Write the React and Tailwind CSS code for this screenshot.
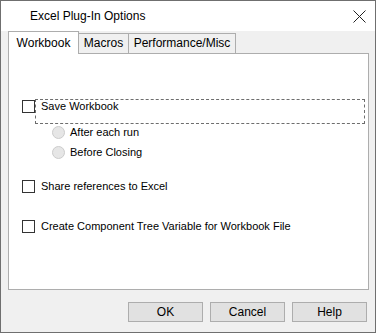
import React from 'react'

function Checkbox() {
  return <div className="w-[13px] h-[13px] border border-[#333333] bg-white shrink-0" />
}

function Radio() {
  return <div className="w-[13px] h-[13px] rounded-full border border-[#cccccc] bg-[#e6e6e6] shrink-0" />
}

const BUTTONS = ['OK', 'Cancel', 'Help']

export default function App() {
  return (
    <div className="w-[376px] h-[333px] border border-[#6f6f6f] bg-[#f0f0f0] flex flex-col text-[12px] text-black font-['Liberation_Sans',Arial,sans-serif] select-none">
      {/* title bar */}
      <div className="h-[30px] bg-white flex items-center pl-[29px] pr-[9px] shrink-0">
        <span className="flex-1 leading-[15px]">Excel Plug-In Options</span>
        <svg width="13" height="13" viewBox="0 0 13 13">
          <path d="M0.5 0.5 L12.5 12.5 M12.5 0.5 L0.5 12.5" stroke="#222" strokeWidth="1" fill="none" />
        </svg>
      </div>

      {/* tabs */}
      <div className="flex items-end h-[22px] ml-[7px]">
        <div className="relative z-10 w-[71px] h-[23px] -mb-px border border-b-0 border-[#adadad] bg-white flex items-center justify-center leading-[15px]">
          Workbook
        </div>
        <div className="w-[51px] h-[20px] -ml-px border border-b-0 border-[#adadad] bg-[#f0f0f0] flex items-center justify-center leading-[15px]">
          Macros
        </div>
        <div className="w-[108px] h-[20px] -ml-px border border-b-0 border-[#adadad] bg-[#f0f0f0] flex items-center justify-center leading-[15px]">
          Performance/Misc
        </div>
      </div>

      {/* panel */}
      <div className="h-[237px] ml-[7px] mr-[6px] border border-[#adadad] bg-white flex flex-col shrink-0 text-[11px]">
        <div className="flex mt-[45px] pl-[13px]">
          <div className="mt-[1px]"><Checkbox /></div>
          <div className="w-[330px] h-[25px] border border-dashed border-[#6d6d6d] pl-[5px] leading-[13px]">
            Save Workbook
          </div>
        </div>
        <div className="flex items-center h-[13px] mt-[2px] pl-[43px] gap-[5px]">
          <Radio />
          <span className="leading-[14px] mb-[2px]">After each run</span>
        </div>
        <div className="flex items-center h-[13px] mt-[7px] pl-[43px] gap-[5px]">
          <Radio />
          <span className="leading-[14px] mb-[2px]">Before Closing</span>
        </div>
        <div className="flex items-center h-[13px] mt-[21px] pl-[13px] gap-[6px]">
          <Checkbox />
          <span className="leading-[14px] mb-[2px]">Share references to Excel</span>
        </div>
        <div className="flex items-center h-[13px] mt-[27px] pl-[13px] gap-[6px]">
          <Checkbox />
          <span className="leading-[14px] mb-[2px]">Create Component Tree Variable for Workbook File</span>
        </div>
      </div>

      {/* buttons */}
      <div className="flex justify-end gap-[7px] mt-[12px] pr-[8px]">
        {BUTTONS.map(b => (
          <button key={b} className="w-[75px] h-[20px] border border-[#adadad] bg-[#e1e1e1] flex items-center justify-center leading-[15px]">
            {b}
          </button>
        ))}
      </div>
    </div>
  )
}
